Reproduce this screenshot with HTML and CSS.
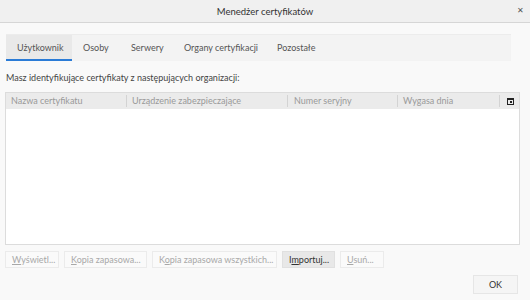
FILE: index.html
```html
<!DOCTYPE html>
<html lang="pl">
<head>
    <meta charset="UTF-8">
    <title>Menedżer certyfikatów</title>
    <link rel="stylesheet" href="styles.css">
</head>
<body>
    <div class="titlebar">
        <span class="title">Menedżer certyfikatów</span>
        <span class="close">&#x2715;</span>
    </div>
    <div class="content">
        <div class="tabs">
            <div class="tab t1 selected">Użytkownik</div>
            <div class="tab t2">Osoby</div>
            <div class="tab t3">Serwery</div>
            <div class="tab t4">Organy certyfikacji</div>
            <div class="tab t5">Pozostałe</div>
        </div>
        <p class="intro">Masz identyfikujące certyfikaty z następujących organizacji:</p>
        <div class="tree">
            <div class="tree-head">
                <div class="col c1">Nazwa certyfikatu</div>
                <div class="col c2">Urządzenie zabezpieczające</div>
                <div class="col c3">Numer seryjny</div>
                <div class="col c4">Wygasa dnia</div>
                <div class="col picker">
                    <svg width="7" height="7" viewBox="0 0 7 7"><rect x="0.5" y="0.5" width="6" height="6" fill="none" stroke="#222"/><rect x="0" y="0" width="7" height="2" fill="#222"/><rect x="3" y="3" width="2" height="2" fill="#222"/></svg>
                </div>
            </div>
            <div class="tree-body"></div>
        </div>
        <div class="buttons">
            <button class="btn b1" disabled><u>W</u>yświetl...</button>
            <button class="btn b2" disabled><u>K</u>opia zapasowa...</button>
            <button class="btn b3" disabled>K<u>o</u>pia zapasowa wszystkich...</button>
            <button class="btn b4 active">I<u>m</u>portuj...</button>
            <button class="btn b5" disabled><u>U</u>suń...</button>
        </div>
        <div class="footer">
            <button class="btn ok">OK</button>
        </div>
    </div>
</body>
</html>
```

FILE: styles.css
```css
body {
    margin: 0;
    font-family: Lato, "Noto Sans", sans-serif;
    font-size: 9px;
    color: #333;
    background-color: #f9f9f9;
    width: 530px;
    height: 300px;
    overflow: hidden;
}
.titlebar {
    height: 22px;
    background-color: #f0f0f0;
    border-bottom: 1px solid #d6d6d6;
    display: flex;
    align-items: center;
    justify-content: center;
    position: relative;
}
.title {
    color: #333;
    font-size: 9.5px;
}
.close {
    position: absolute;
    right: 6px;
    top: 5px;
    font-size: 8px;
    color: #555;
}
.content {
    padding: 11px 10px 0 5px;
}
.tabs {
    display: flex;
    background-color: #f3f3f3;
    border-top: 1px solid #ececec;
    height: 26px;
    margin-right: 9px;
    margin-left: 1px;
}
.tab {
    padding-left: 11px;
    line-height: 25px;
    color: #555;
    border-bottom: 2px solid transparent;
    box-sizing: border-box;
    height: 26px;
}
.t1 { width: 66px; }
.t2 { width: 48px; }
.t3 { width: 53px; }
.t4 { width: 93px; }
.tab.selected {
    background-color: #e9e9e9;
    border-bottom-color: #2a7bd6;
}
.intro {
    margin: 9px 0 0 1px;
    line-height: 15px;
    color: #444;
}
.tree {
    margin-top: 7px;
    border: 1px solid #dcdcdc;
    background-color: #fff;
}
.tree-head {
    display: flex;
    height: 16px;
    background-color: #ebebeb;
    color: #999;
    align-items: center;
}
.col {
    padding-left: 5px;
    box-sizing: border-box;
    border-left: 1px solid #d3d3d3;
    line-height: 12px;
}
.c1 {
    width: 120px;
    border-left: none;
}
.c2 { width: 161px; }
.c3 { width: 110px; padding-left: 6px; }
.c4 { width: 102px; }
.picker {
    flex: 1;
    display: flex;
    align-items: center;
    padding-left: 7px;
    height: 12px;
}
.tree-body {
    height: 135px;
}
.buttons {
    display: flex;
    gap: 5px;
    margin-top: 6px;
}
.btn {
    font-family: Lato, "Noto Sans", sans-serif;
    font-size: 9px;
    height: 17px;
    padding: 0 0 0 6px;
    text-align: left;
    border: 1px solid #ebebeb;
    background-color: #fafafa;
    color: #a8a8a8;
    border-radius: 0;
    white-space: nowrap;
    overflow: hidden;
}
.b1 { width: 54px; }
.b2 { width: 83px; }
.b3 { width: 125px; }
.b4 { width: 53px; }
.b5 { width: 44px; }
.btn.active {
    background-color: #e8e8e8;
    border-color: #e0e0e0;
    color: #333;
}
.footer {
    display: flex;
    justify-content: flex-end;
    margin-top: 7px;
    margin-right: 2px;
}
.btn.ok {
    width: 45px;
    height: 19px;
    padding: 0;
    text-align: center;
    color: #333;
    background-color: #f5f5f5;
    border-color: #e6e6e6;
}
```
